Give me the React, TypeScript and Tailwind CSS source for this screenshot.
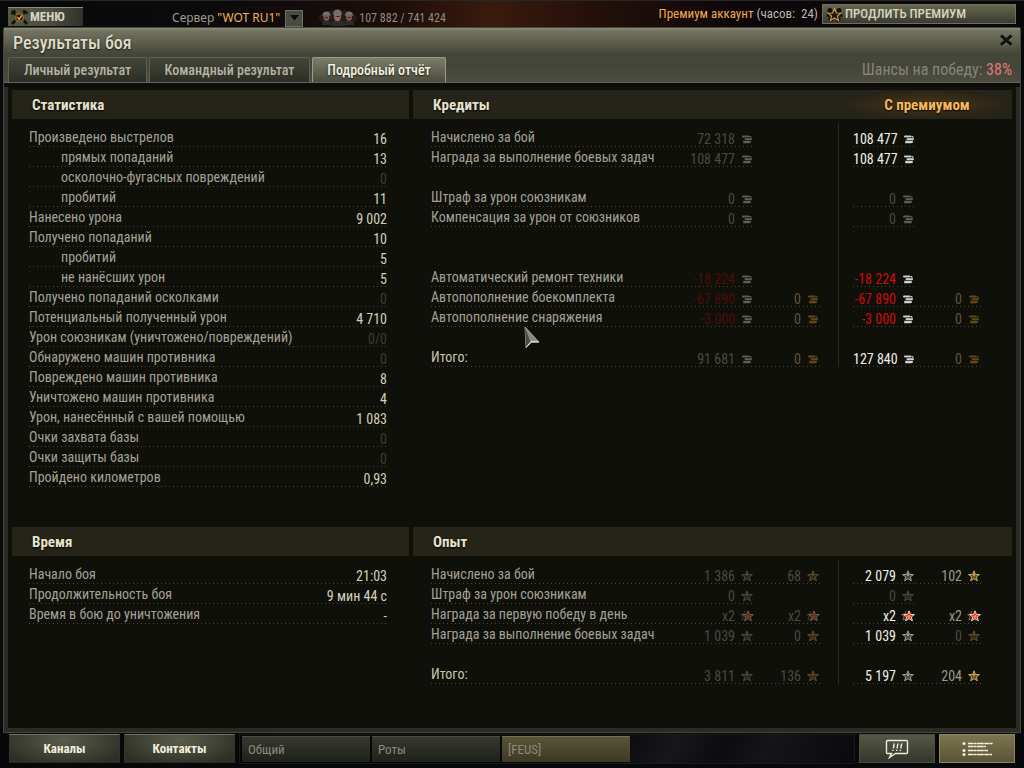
import React from 'react';
import clsx from 'clsx';

type Tone = 'dim' | 'lit' | 'bright' | 'red' | 'redDim' | 'goldDim';
type IconKind = 'credits' | 'gold' | 'xp' | 'freeXp' | 'xpBonus';

interface Amount {
  text: string;
  tone: Tone;
  icon: IconKind;
  faded?: boolean;
}

interface IncomeRow {
  label: string;
  total?: boolean;
  base: Amount;
  baseExtra?: Amount;
  premium: Amount;
  premiumExtra?: Amount;
}

interface StatRow {
  label: string;
  value: string;
  nested?: boolean;
}

const toneClass: Record<Tone, string> = {
  dim: 'text-[#4a4943]',
  lit: 'text-[#9a988c]',
  bright: 'text-[#f0efe6]',
  red: 'text-[#d00a0a]',
  redDim: 'text-[#4c0d0b]',
  goldDim: 'text-[#62543a]',
};

const dots =
  'bg-[repeating-linear-gradient(90deg,#48473a_0_1px,transparent_1px_4px)] bg-[length:100%_1px] bg-bottom bg-no-repeat';

const stats: StatRow[] = [
  { label: 'Произведено выстрелов', value: '16' },
  { label: 'прямых попаданий', value: '13', nested: true },
  { label: 'осколочно-фугасных повреждений', value: '0', nested: true },
  { label: 'пробитий', value: '11', nested: true },
  { label: 'Нанесено урона', value: '9 002' },
  { label: 'Получено попаданий', value: '10' },
  { label: 'пробитий', value: '5', nested: true },
  { label: 'не нанёсших урон', value: '5', nested: true },
  { label: 'Получено попаданий осколками', value: '0' },
  { label: 'Потенциальный полученный урон', value: '4 710' },
  { label: 'Урон союзникам (уничтожено/повреждений)', value: '0/0' },
  { label: 'Обнаружено машин противника', value: '0' },
  { label: 'Повреждено машин противника', value: '8' },
  { label: 'Уничтожено машин противника', value: '4' },
  { label: 'Урон, нанесённый с вашей помощью', value: '1 083' },
  { label: 'Очки захвата базы', value: '0' },
  { label: 'Очки защиты базы', value: '0' },
  { label: 'Пройдено километров', value: '0,93' },
];

const time: StatRow[] = [
  { label: 'Начало боя', value: '21:03' },
  { label: 'Продолжительность боя', value: '9 мин 44 с' },
  { label: 'Время в бою до уничтожения', value: '-' },
];

const credits = (text: string, tone: Tone): Amount => ({
  text,
  tone,
  icon: 'credits',
  faded: tone === 'dim' || tone === 'redDim',
});
const noGold: Amount = { text: '0', tone: 'goldDim', icon: 'gold', faded: true };

// null is an empty line between groups
const creditRows: (IncomeRow | null)[] = [
  { label: 'Начислено за бой', base: credits('72 318', 'dim'), premium: credits('108 477', 'bright') },
  { label: 'Награда за выполнение боевых задач', base: credits('108 477', 'dim'), premium: credits('108 477', 'bright') },
  null,
  { label: 'Штраф за урон союзникам', base: credits('0', 'dim'), premium: credits('0', 'dim') },
  { label: 'Компенсация за урон от союзников', base: credits('0', 'dim'), premium: credits('0', 'dim') },
  null,
  null,
  { label: 'Автоматический ремонт техники', base: credits('-18 224', 'redDim'), premium: credits('-18 224', 'red') },
  {
    label: 'Автопополнение боекомплекта',
    base: credits('-67 890', 'redDim'),
    baseExtra: noGold,
    premium: credits('-67 890', 'red'),
    premiumExtra: noGold,
  },
  {
    label: 'Автопополнение снаряжения',
    base: credits('-3 000', 'redDim'),
    baseExtra: noGold,
    premium: credits('-3 000', 'red'),
    premiumExtra: noGold,
  },
  null,
  {
    label: 'Итого:',
    total: true,
    base: credits('91 681', 'dim'),
    baseExtra: noGold,
    premium: credits('127 840', 'bright'),
    premiumExtra: noGold,
  },
];

const xpRows: (IncomeRow | null)[] = [
  {
    label: 'Начислено за бой',
    base: { text: '1 386', tone: 'dim', icon: 'xp', faded: true },
    baseExtra: { text: '68', tone: 'dim', icon: 'freeXp', faded: true },
    premium: { text: '2 079', tone: 'bright', icon: 'xp' },
    premiumExtra: { text: '102', tone: 'lit', icon: 'freeXp' },
  },
  {
    label: 'Штраф за урон союзникам',
    base: { text: '0', tone: 'dim', icon: 'xp', faded: true },
    premium: { text: '0', tone: 'dim', icon: 'xp', faded: true },
  },
  {
    label: 'Награда за первую победу в день',
    base: { text: 'x2', tone: 'dim', icon: 'xpBonus', faded: true },
    baseExtra: { text: 'x2', tone: 'dim', icon: 'xpBonus', faded: true },
    premium: { text: 'x2', tone: 'bright', icon: 'xpBonus' },
    premiumExtra: { text: 'x2', tone: 'lit', icon: 'xpBonus' },
  },
  {
    label: 'Награда за выполнение боевых задач',
    base: { text: '1 039', tone: 'dim', icon: 'xp', faded: true },
    baseExtra: { text: '0', tone: 'dim', icon: 'freeXp', faded: true },
    premium: { text: '1 039', tone: 'bright', icon: 'xp' },
    premiumExtra: { text: '0', tone: 'dim', icon: 'freeXp', faded: true },
  },
  null,
  {
    label: 'Итого:',
    total: true,
    base: { text: '3 811', tone: 'dim', icon: 'xp', faded: true },
    baseExtra: { text: '136', tone: 'dim', icon: 'freeXp', faded: true },
    premium: { text: '5 197', tone: 'bright', icon: 'xp' },
    premiumExtra: { text: '204', tone: 'lit', icon: 'freeXp' },
  },
];

function CoinIcon({ gold }: { gold?: boolean }) {
  const light = gold ? '#d99d34' : '#d2d2d0';
  const dark = gold ? '#6b4a14' : '#4c4d48';
  return (
    <svg width="10" height="9" viewBox="0 0 10 9" aria-hidden="true">
      <rect x="0" y=".5" width="7.5" height="2" rx="1" fill={light} />
      <rect x="2.500" y="2.500" width="7.500" height="1" rx=".5" fill={dark} />
      <rect x="2.500" y="3.200" width="7.500" height="2" rx="1" fill={light} />
      <rect x="1" y="5.200" width="8" height="1" rx=".5" fill={dark} />
      <rect x="1" y="6" width="8" height="2" rx="1" fill={light} />
      <path d="M1 8.500h6.500" stroke={dark} strokeWidth=".8" />
      <path d="M7.500 1.500h1.500v1.500" stroke={light} strokeWidth=".9" fill="none" />
    </svg>
  );
}

const starPath = 'M6 .8 7.4 4.4 11.4 4.6 8.3 7 9.4 10.8 6 8.7 2.6 10.8 3.7 7 .6 4.6 4.6 4.4Z';

function StarIcon({ gold }: { gold?: boolean }) {
  return (
    <svg width="12" height="12" viewBox="0 0 12 12" aria-hidden="true">
      <path
        d={starPath}
        fill={gold ? '#6d5020' : '#454841'}
        stroke={gold ? '#dcb56a' : '#a9ada5'}
        strokeWidth=".9"
        strokeLinejoin="miter"
      />
      <path d="M6 3 6.700 5 6 6.400 5.300 5Z" fill={gold ? '#ffe2a0' : '#dfe2da'} />
    </svg>
  );
}

function BonusIcon() {
  return (
    <svg width="14" height="12" viewBox="0 0 14 12" aria-hidden="true">
      <path d="M5 1 3.9 3.9.6 4.6 3 6.6 1.8 10 4.4 9" fill="#3a2820" stroke="#8f7668" strokeWidth=".8" />
      <g transform="translate(2 0)">
        <path d={starPath} fill="#e0401e" stroke="#f3cfc4" strokeWidth="1" />
        <circle cx="6" cy="6.400" r="1.500" fill="#ff8a58" />
      </g>
    </svg>
  );
}

function AmountIcon({ kind }: { kind: IconKind }) {
  if (kind === 'xpBonus') return <BonusIcon />;
  if (kind === 'credits' || kind === 'gold') return <CoinIcon gold={kind === 'gold'} />;
  return <StarIcon gold={kind === 'freeXp'} />;
}

function AmountCell({ amount }: { amount?: Amount }) {
  if (!amount) return <td />;
  return (
    <td className={clsx('p-0 align-bottom', dots)}>
      <div className="flex h-4 items-center justify-end gap-1">
        <span className={clsx('leading-4 whitespace-nowrap', toneClass[amount.tone])}>{amount.text}</span>
        <span className={clsx('flex w-4 justify-center', amount.faded && 'opacity-40')}>
          <AmountIcon kind={amount.icon} />
        </span>
      </div>
    </td>
  );
}

function IncomeTable({ rows, name }: { rows: (IncomeRow | null)[]; name: string }) {
  return (
    <table className="w-full table-fixed border-collapse" aria-label={name}>
      <colgroup>
        <col />
        <col className="w-20" />
        <col className="w-[66px]" />
        <col className="w-[18px]" />
        <col className="w-[14px]" />
        <col className="w-[63px]" />
        <col className="w-[66px]" />
      </colgroup>
      <tbody>
        <tr className="h-1">
          <td colSpan={4} className="border-r border-[#2c2c24] p-0" />
          <td colSpan={3} className="p-0" />
        </tr>
        {rows.map((row, i) =>
          row ? (
            <tr key={i} className="h-5">
              <th
                scope="row"
                className={clsx(
                  'p-0 text-left align-middle leading-4 font-normal whitespace-nowrap',
                  row.total ? 'text-[#c9c6b0]' : 'text-[#a3a197]',
                  dots,
                )}
              >
                {row.label}
              </th>
              <AmountCell amount={row.base} />
              <AmountCell amount={row.baseExtra} />
              <td className="border-r border-[#2c2c24] p-0" />
              <td className="p-0" />
              <AmountCell amount={row.premium} />
              <AmountCell amount={row.premiumExtra} />
            </tr>
          ) : (
            <tr key={i} className="h-5">
              <td colSpan={4} className="border-r border-[#2c2c24] p-0" />
              <td colSpan={3} className="p-0" />
            </tr>
          ),
        )}
      </tbody>
    </table>
  );
}

function StatTable({ rows, name }: { rows: StatRow[]; name: string }) {
  return (
    <table className="mt-1 w-full border-collapse" aria-label={name}>
      <tbody>
        {rows.map((row, i) => (
          <tr key={i} className={clsx('h-5', dots)}>
            <th
              scope="row"
              className={clsx(
                'p-0 text-left align-middle leading-4 font-normal text-[#a3a197]',
                row.nested && 'pl-8',
              )}
            >
              {row.label}
            </th>
            <td
              className={clsx(
                'p-0 text-right align-bottom leading-4 whitespace-nowrap',
                /^0(\/0)?$/.test(row.value) ? 'text-[#3d3c35]' : 'text-[#d3d0ba]',
              )}
            >
              {row.value}
            </td>
          </tr>
        ))}
      </tbody>
    </table>
  );
}

function PanelTitle({ children, premium }: { children: React.ReactNode; premium?: boolean }) {
  return (
    <div className="flex h-[29px] items-center justify-between bg-[#262319] text-[15px] leading-5 font-bold">
      <h2 className="pl-5 text-[#e6e3cd] [text-shadow:0_1px_2px_#000]">{children}</h2>
      {premium && (
        <span className="flex h-full w-[170px] items-center justify-center bg-[radial-gradient(ellipse_at_center,#4d3517_0%,transparent_70%)] text-[#f5b85c] [text-shadow:0_1px_2px_#000]">
          С премиумом
        </span>
      )}
    </div>
  );
}

function TopBar() {
  return (
    <header className="flex h-[27px] items-end border-t border-[#25282a] bg-[linear-gradient(90deg,#08090b_0%,#0c0a0b_20%,#1c0d09_38%,#3a1a0d_48%,#241009_58%,#0d0709_72%,#08080a_100%)] px-2">
      <button className="mb-px flex h-[19px] w-[75px] items-center gap-0.5 border-t border-[#8c8d77] bg-[linear-gradient(100deg,#55563f_0%,#4d4e40_55%,#2f3028_100%)] pl-[3px] text-[13px] leading-4 font-bold text-[#d6d4c0]">
        <svg width="17" height="15" viewBox="0 0 17 15" aria-hidden="true">
          <path d="M1 1l5 5M16 14l-4-4M1 14l4-4M11 5l4-4" stroke="#11110d" strokeWidth="2.6" />
          <path d="M0 3.5 3.5 3.5 3.5 0M12 0l4.5 3.5" stroke="#11110d" strokeWidth="2" fill="none" />
          <rect x="5" y="4" width="7" height="7" fill="#2b1c08" stroke="#b27a28" strokeWidth="1" />
          <path d="M6.4 7.2 8.2 9.4 11 5" stroke="#efb04c" strokeWidth="1.2" fill="none" />
        </svg>
        МЕНЮ
      </button>

      <div className="ml-[89px] flex h-[19px] items-center">
        <label htmlFor="server" className="font-['Noto_Sans',sans-serif] text-xs leading-4 text-[#9b998d]">
          Сервер
        </label>
        <div className="relative ml-[3px] w-[86px]">
          <select
            id="server"
            className="block w-full appearance-none bg-transparent font-['Noto_Sans',sans-serif] text-xs leading-4 text-[#f0b35c] outline-none"
          >
            <option>"WOT RU1"</option>
          </select>
          <span className="pointer-events-none absolute top-0 right-0 flex h-[17px] w-[18px] items-center justify-center border border-[#6d6e62] bg-[#4a4b42]">
            <svg width="9" height="6" viewBox="0 0 9 6" aria-hidden="true">
              <path d="M0 0h9L4.500 5.500Z" fill="#0c0c09" />
            </svg>
          </span>
        </div>
        <svg className="ml-4" width="38" height="17" viewBox="0 0 38 17" aria-hidden="true">
          <ellipse cx="19" cy="9" rx="19" ry="8" fill="#8d8f90" opacity=".12" />
          <path d="M3 16c0-4 2-5 4-5s5 1 5 5ZM25 16c0-4 2-5 5-5s5 1 5 5ZM12 17c0-5 3-6 7-6s7 1 7 6Z" fill="#2c2b2b" />
          <ellipse cx="7.500" cy="8" rx="3" ry="3.800" fill="#81584c" />
          <ellipse cx="30" cy="8" rx="3" ry="3.800" fill="#81584c" />
          <ellipse cx="18.500" cy="7.500" rx="3.600" ry="4.800" fill="#95695a" />
          <path d="M3.500 7q0-4.500 4-4.500t4 4.500q-4-2-8 0ZM26 7q0-4.500 4-4.500t4 4.500q-4-2-8 0ZM14 6q0-5.500 4.500-5.500T23 6q-4.500-2-9 0Z" fill="#6f7173" />
          <path d="M6 8.500h3M16.500 7.500h4.500M28.500 8.500h3" stroke="#2d1b17" strokeWidth=".8" />
        </svg>
        <span className="ml-0.5 text-xs leading-4 text-[#8e8c84]">107 882 / 741 424</span>
      </div>

      <div className="ml-auto flex items-center gap-1 self-center">
        <span className="text-[13px] leading-5 whitespace-pre text-[#b9b8ae]">
          <span className="text-[#f0a94e]">Премиум аккаунт</span> (часов:{'  '}24)
        </span>
        <button className="flex h-5 w-[194px] items-center gap-0.5 border border-[#6f705c] bg-[linear-gradient(180deg,#66674f_0%,#4c4d3d_60%,#3a3b2f_100%)] pl-[3px] text-[13px] leading-4 font-medium text-[#d6d4c0]">
          <svg width="17" height="15" viewBox="0 0 17 15" aria-hidden="true">
            <g fill="#11110d">
              <circle cx="4" cy="3.500" r="2.500" />
              <circle cx="13" cy="3.500" r="2.500" />
              <circle cx="2.500" cy="8" r="2" />
              <circle cx="14.500" cy="8" r="2" />
              <circle cx="5" cy="12" r="2.500" />
              <circle cx="12" cy="12" r="2.500" />
            </g>
            <path
              d="M8.500 1.500 10.300 6 15 6.200 11.400 9 12.600 13.500 8.500 11 4.400 13.500 5.600 9 2 6.200 6.700 6Z"
              fill="#1d1609"
              stroke="#cf9a48"
              strokeWidth="1.100"
            />
          </svg>
          ПРОДЛИТЬ ПРЕМИУМ
        </button>
      </div>
    </header>
  );
}

const tabBase = 'h-[25px] rounded-t-xs border border-b-0 text-sm leading-4 font-medium';
const tabIdle = 'border-[#5e5f50] bg-linear-to-b from-[#45463a] to-[#2c2d25] text-[#b5b3a1]';

function WindowHeader() {
  return (
    <div className="border-b-4 border-[#0c0c08] bg-[linear-gradient(180deg,#8d8e76_0,#717260_3px,#62634f_12px,#45463a_26px,#45463a_40px,#4e4f41_58px)]">
      <div className="flex h-[29px] items-center justify-between pr-1.5 pl-[9px]">
        <h1 className="text-lg leading-6 font-medium text-[#dddbc8] [text-shadow:0_1px_2px_#1a1a14]">Результаты боя</h1>
        <button aria-label="Закрыть" className="mb-1">
          <svg width="15" height="13" viewBox="0 0 15 13" aria-hidden="true">
            <path d="M2.500 2.500 12.500 11.500M12.500 2.500 2.500 11.500" stroke="#8a8b78" strokeWidth="3.400" />
            <path d="M2 1.500 12.500 11M12.500 1.500 2 11" stroke="#15150f" strokeWidth="3.200" />
          </svg>
        </button>
      </div>
      <div className="flex items-end justify-between border-b border-[#64655a] pr-2 pl-1">
        <div role="tablist" className="flex gap-0.5">
          <button role="tab" aria-selected="false" className={clsx(tabBase, tabIdle, 'w-[139px]')}>
            Личный результат
          </button>
          <button role="tab" aria-selected="false" className={clsx(tabBase, tabIdle, 'w-[161px]')}>
            Командный результат
          </button>
          <button
            role="tab"
            aria-selected="true"
            className={clsx(
              tabBase,
              'w-[134px] border-[#9a9b84] bg-linear-to-b from-[#7d7e68] to-[#4b4c3e] text-[#f2f0e0] [text-shadow:0_1px_2px_#1a1a14]',
            )}
          >
            Подробный отчёт
          </button>
        </div>
        <p className="text-base leading-6 text-[#85857a]">
          Шансы на победу: <span className="text-[#e07c76]">38%</span>
        </p>
      </div>
    </div>
  );
}

const footerButton =
  'h-[29px] w-[111px] border border-t-[#74765f] border-x-[#33342a] border-b-[#2b2c22] bg-[radial-gradient(ellipse_at_50%_20%,#5a5c4a,#2e3027_85%)] text-[13px] leading-4 font-bold text-[#f0eedc]';
const chatTab = 'h-[26px] w-32 border-t px-1.5 text-left text-[13px] leading-4 text-[#8b8a7a]';

function BottomBar() {
  return (
    <footer className="flex h-[35px] items-start gap-1 bg-[#070809] px-[9px] pt-px">
      <button className={footerButton}>Каналы</button>
      <button className={footerButton}>Контакты</button>
      <div className="flex h-[30px] grow items-center gap-0.5 border border-[#191a1a] bg-[linear-gradient(115deg,#050607_0%,#0a0a0b_60%,#17171a_70%,#0c0c0e_78%,#151517_85%,#0a0a0c_100%)] pl-0.5">
        <button className={clsx(chatTab, 'border-[#4e5044] bg-linear-to-b from-[#363830] to-[#1e201b]')}>Общий</button>
        <button className={clsx(chatTab, 'border-[#4e5044] bg-linear-to-b from-[#363830] to-[#1e201b]')}>Роты</button>
        <button className={clsx(chatTab, 'border-[#77704c] bg-linear-to-b from-[#59543a] to-[#3d3925]')}>[FEUS]</button>
      </div>
      <div className="flex gap-1">
        <button
          aria-label="Уведомления"
          className="flex h-[29px] w-[76px] items-center justify-center border border-[#4b4d3e] bg-linear-to-b from-[#565846] to-[#34362b]"
        >
          <svg width="24" height="20" viewBox="0 0 24 20" aria-hidden="true">
            <path
              d="M2.500 1.500h19a1 1 0 0 1 1 1v11a1 1 0 0 1-1 1H10.500L4.500 18.500 6.500 14.500h-4a1 1 0 0 1-1-1v-11a1 1 0 0 1 1-1Z"
              fill="none"
              stroke="#eeecd8"
              strokeWidth="1.400"
            />
            <path
              d="M9.200 4.500 8.400 9.500M12.900 4.500 12.100 9.500M16.600 4.500 15.800 9.500M8 10.700v1.300M11.700 10.700v1.300M15.400 10.700v1.300"
              stroke="#eeecd8"
              strokeWidth="1.500"
            />
          </svg>
        </button>
        <button
          aria-label="Список"
          className="flex h-[29px] w-[76px] items-center justify-center border border-[#8d8459] bg-linear-to-b from-[#7d7550] to-[#5a5438]"
        >
          <svg width="33" height="16" viewBox="0 0 33 16" aria-hidden="true">
            <g fill="#f4f1dc">
              <circle cx="3" cy="2.500" r="1.500" />
              <circle cx="3" cy="9.500" r="1.500" />
              <circle cx="3" cy="13.500" r="1.500" />
            </g>
            <path
              d="M7 2.500h25M7 5.500h18M7 9.500h20M7 13.500h24"
              stroke="#f4f1dc"
              strokeWidth="1.400"
              strokeDasharray="5 .4 3 .4 7 .4"
            />
          </svg>
        </button>
      </div>
    </footer>
  );
}

// In-game pointer, drawn above the window
function GameCursor() {
  return (
    <svg
      className="pointer-events-none absolute top-[326px] left-[523px]"
      width="18"
      height="24"
      viewBox="0 0 18 24"
      aria-hidden="true"
    >
      <path d="M2 1 16 16 8.500 16.500 3 21.500Z" fill="#8b8a80" stroke="#b9b8ae" strokeWidth=".8" />
      <path d="M2 1 7.500 16.500 3 21.500Z" fill="#4b4a44" />
      <path d="M3 21.500 8 15.500 16 16" fill="none" stroke="#e8e6da" strokeWidth="1" />
    </svg>
  );
}

export default function App() {
  return (
    <div className="relative flex min-h-screen flex-col bg-[#08090b] font-['Roboto_Condensed','Liberation_Sans',sans-serif] text-sm">
      <TopBar />
      <main className="mx-[3px] flex grow flex-col rounded-t-xs border border-[#45453b] bg-[#11110b]">
        <WindowHeader />
        <div className="flex grow flex-col border-x-4 border-b-4 border-[#2b2b25] bg-[#10100a] px-1 pt-[3px]">
          <div className="grid grow grid-cols-[397fr_599fr] grid-rows-[auto_1fr] gap-x-1">
            <section className="pb-10">
              <PanelTitle>Статистика</PanelTitle>
              <div className="pt-1 pr-[22px] pl-[17px]">
                <StatTable rows={stats} name="Статистика" />
              </div>
            </section>
            <section className="pb-10">
              <PanelTitle premium>Кредиты</PanelTitle>
              <div className="pt-1 pr-[30px] pl-[18px]">
                <IncomeTable rows={creditRows} name="Кредиты" />
              </div>
            </section>
            <section className="pb-10">
              <PanelTitle>Время</PanelTitle>
              <div className="pt-1 pr-[22px] pl-[17px]">
                <StatTable rows={time} name="Время" />
              </div>
            </section>
            <section className="pb-10">
              <PanelTitle>Опыт</PanelTitle>
              <div className="pt-1 pr-[30px] pl-[18px]">
                <IncomeTable rows={xpRows} name="Опыт" />
              </div>
            </section>
          </div>
        </div>
      </main>
      <BottomBar />
      <GameCursor />
    </div>
  );
}
